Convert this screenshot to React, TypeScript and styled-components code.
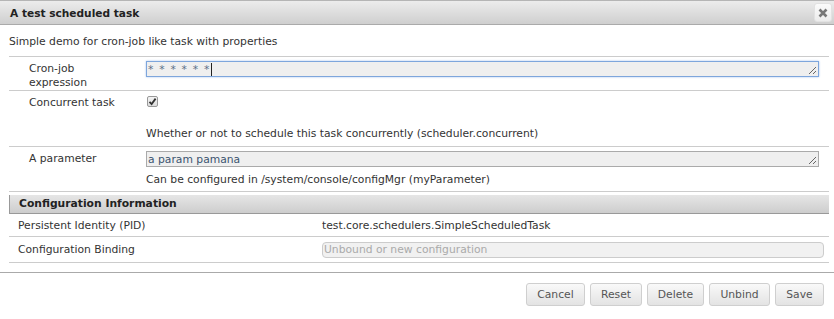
import React from "react";
import styled, { createGlobalStyle } from "styled-components";

const GlobalStyle = createGlobalStyle`
  html, body { margin: 0; padding: 0; background: #fff; }
  body {
    font-family: "DejaVu Sans", Verdana, sans-serif;
    font-size: 10.75px;
    color: #333;
  }
  * { box-sizing: border-box; }
`;

const Dialog = styled.div`
  width: 834px;
  height: 319px;
  display: flex;
  flex-direction: column;
  background: #fff;
`;

const TitleBar = styled.div`
  height: 25px;
  border-top: 1px solid #b5b5b5;
  border-bottom: 1px solid #aaa;
  background: linear-gradient(#ececec, #cfcfcf);
  display: flex;
  align-items: center;
  justify-content: space-between;
  padding: 0 2px 0 10px;
`;

const Title = styled.span`
  font-weight: bold;
  font-size: 10.6px;
  color: #222;
`;

const CloseButton = styled.button`
  width: 18px;
  height: 19px;
  padding: 0;
  border: 1px solid #e2e2e2;
  border-radius: 3px;
  background: linear-gradient(#fbfbfb, #ececec);
  display: flex;
  align-items: center;
  justify-content: center;
`;

const Body = styled.div`
  padding: 0 5px 0 9px;
  flex: 1;
`;

const Description = styled.div`
  height: 32px;
  padding-top: 10px;
  line-height: 14px;
  border-bottom: 1px solid #ccc;
`;

const Row = styled.div<{ $h: number }>`
  display: grid;
  grid-template-columns: 137px 1fr;
  height: ${(p) => p.$h}px;
  border-bottom: 1px solid #ccc;
`;

const Label = styled.div`
  padding: 5px 0 0 20px;
  line-height: 14px;
`;

const ValueCell = styled.div`
  padding: 4px 10px 0 0;
  display: flex;
  flex-direction: column;
`;

const TextArea = styled.div<{ $focus?: boolean }>`
  position: relative;
  height: 16px;
  background: #efefef;
  border: 1px solid ${(p) => (p.$focus ? "#7ea6dc" : "#aaa")};
  box-shadow: ${(p) => (p.$focus ? "0 0 2px #a9c5ee" : "none")};
  line-height: 13px;
  padding-left: 1px;
  color: #3b5470;
  display: flex;
  align-items: center;
`;

const Masked = styled.span`
  letter-spacing: 1.2px;
  color: #5a6f88;
`;

const Caret = styled.span`
  display: inline-block;
  width: 1px;
  height: 13px;
  background: #222;
`;

const Grip = styled.svg`
  position: absolute;
  right: 1px;
  bottom: 1px;
`;

const Help = styled.div<{ $top: number }>`
  margin-top: ${(p) => p.$top}px;
  line-height: 14px;
  color: #333;
`;

const Check = styled.div`
  width: 11px;
  height: 11px;
  margin: 1px 0 0 1px;
  border: 1px solid #999;
  border-radius: 2px;
  background: linear-gradient(#f4f4f4, #dcdcdc);
  display: flex;
  align-items: center;
  justify-content: center;
`;

const SectionHeader = styled.div`
  margin-top: 3px;
  height: 19px;
  border-left: 1px solid #999;
  border-bottom: 1px solid #999;
  background: linear-gradient(#e6e6e6, #cdcdcd);
  font-weight: bold;
  padding-left: 9px;
  line-height: 18px;
  color: #222;
`;

const InfoRow = styled.div<{ $h: number }>`
  display: grid;
  grid-template-columns: 304px 1fr;
  align-items: center;
  height: ${(p) => p.$h}px;
  border-bottom: 1px solid #ccc;
  padding-left: 9px;
`;

const Disabled = styled.div`
  height: 16px;
  margin-right: 5px;
  border: 1px solid #ccc;
  border-radius: 4px;
  background: #f1f1f1;
  color: #aaa;
  line-height: 14px;
  padding-left: 1px;
`;

const ButtonPane = styled.div`
  height: 47px;
  border-top: 1px solid #aaa;
  display: flex;
  justify-content: flex-end;
  align-items: flex-start;
  gap: 5px;
  padding: 10px 10px 0 0;
`;

const Button = styled.button<{ $w: number }>`
  width: ${(p) => p.$w}px;
  height: 23px;
  border: 1px solid #cfcfcf;
  border-radius: 3px;
  background: linear-gradient(#f9f9f9, #e3e3e3);
  font-family: inherit;
  font-size: 10.75px;
  color: #555;
  padding: 0;
`;

const ResizeGrip = () => (
  <Grip width="9" height="9" viewBox="0 0 9 9">
    <path d="M1 8 L8 1 M5 8 L8 5" stroke="#666" strokeWidth="1" />
  </Grip>
);

export default function App() {
  return (
    <>
      <GlobalStyle />
      <Dialog>
        <TitleBar>
          <Title>A test scheduled task</Title>
          <CloseButton aria-label="close">
            <svg width="10" height="10" viewBox="0 0 10 10">
              <path d="M1.5 1.5 L8.5 8.5 M8.5 1.5 L1.5 8.5" stroke="#777" strokeWidth="2.6" />
            </svg>
          </CloseButton>
        </TitleBar>
        <Body>
          <Description>Simple demo for cron-job like task with properties</Description>
          <Row $h={34}>
            <Label>
              Cron-job
              <br />
              expression
            </Label>
            <ValueCell>
              <TextArea $focus>
                <Masked>* * * * * *</Masked>
                <Caret />
                <ResizeGrip />
              </TextArea>
            </ValueCell>
          </Row>
          <Row $h={56}>
            <Label>Concurrent task</Label>
            <ValueCell>
              <Check>
                <svg width="9" height="9" viewBox="0 0 9 9">
                  <path d="M1.5 4.8 L3.6 7 L7.6 1.6" stroke="#333" strokeWidth="1.8" fill="none" />
                </svg>
              </Check>
              <Help $top={20}>Whether or not to schedule this task concurrently (scheduler.concurrent)</Help>
            </ValueCell>
          </Row>
          <Row $h={45}>
            <Label>A parameter</Label>
            <ValueCell>
              <TextArea>
                a param pamana
                <ResizeGrip />
              </TextArea>
              <Help $top={6}>Can be configured in /system/console/configMgr (myParameter)</Help>
            </ValueCell>
          </Row>
          <SectionHeader>Configuration Information</SectionHeader>
          <InfoRow $h={23}>
            <span>Persistent Identity (PID)</span>
            <span>test.core.schedulers.SimpleScheduledTask</span>
          </InfoRow>
          <InfoRow $h={26}>
            <span>Configuration Binding</span>
            <Disabled>Unbound or new configuration</Disabled>
          </InfoRow>
        </Body>
        <ButtonPane>
          <Button $w={59}>Cancel</Button>
          <Button $w={52}>Reset</Button>
          <Button $w={57}>Delete</Button>
          <Button $w={61}>Unbind</Button>
          <Button $w={49}>Save</Button>
        </ButtonPane>
      </Dialog>
    </>
  );
}
